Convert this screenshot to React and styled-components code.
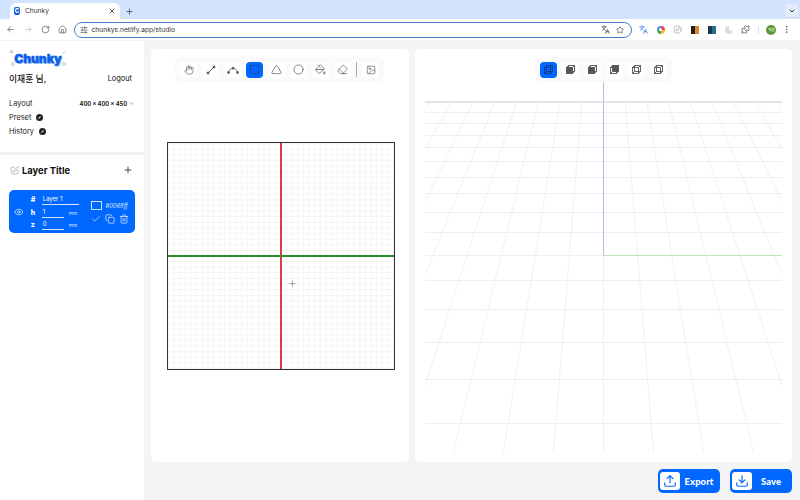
import React from 'react'
import styled, { createGlobalStyle } from 'styled-components'
import {
  ArrowLeft, ArrowRight, RotateCw, Home, X, Plus, ChevronDown, SlidersHorizontal, Languages, Star,
  Puzzle, EllipsisVertical, Compass, Hand, Square, Triangle, Circle, PaintBucket, Eraser, Image,
  Eye, Check, Copy, Trash2, SquarePen, Upload, Download,
} from 'lucide-react'

const BLUE = '#0068ff'

const Global = createGlobalStyle`
html, body { margin: 0; padding: 0; background: #f4f4f4; }
body { font-family: Inter, "Noto Sans CJK KR", sans-serif; color: #111; overflow: hidden; }
* { box-sizing: border-box; }
`
const Page = styled.div`
width: 800px;
height: 500px;
display: flex;
flex-direction: column;
overflow: hidden;
`
const TabStrip = styled.div`
height: 19px;
background: #d3e3fd;
display: flex;
align-items: flex-end;
padding-left: 10px;
`
const Tab = styled.div`
width: 110px;
height: 16px;
background: #fff;
border-radius: 6px 6px 0 0;
display: flex;
align-items: center;
padding: 0 4px 0 4px;
font-size: 6.6px;
color: #333;
`
const Favicon = styled.span`
width: 6px;
height: 8px;
background: #0a5fe0;
border-radius: 2px;
color: #fff;
font-size: 6px;
font-weight: 800;
line-height: 8px;
text-align: center;
margin-right: 5px;
`
const TabTitle = styled.span`
flex: 1;
`
const NewTab = styled.div`
width: 20px;
height: 16px;
display: flex;
align-items: center;
justify-content: center;
margin-left: -1px;
color: #444;
`
const TabMenu = styled.div`
margin-left: auto;
margin-right: 2px;
margin-bottom: 2px;
width: 13px;
height: 13px;
border-radius: 4px;
background: #e4edfd;
display: flex;
align-items: center;
justify-content: center;
color: #333;
`
const BrowserBar = styled.div`
height: 22px;
background: #fff;
display: flex;
align-items: center;
padding: 0 6px 0 2px;
border-bottom: 1px solid #f0f0f0;
`
const NavButton = styled.div`
width: 17.4px;
display: flex;
justify-content: center;
color: ${p => (p.$off ? '#c0c0c0' : '#666')};
`
const Address = styled.div`
width: 558px;
height: 16px;
margin-left: 2.4px;
border: 1.5px solid #4a7fc8;
border-radius: 8px;
display: flex;
align-items: center;
padding: 0 6.5px 0 5px;
font-size: 6.7px;
color: #333;
`
const Url = styled.span`
flex: 1;
margin-left: 3.5px;
`
const AddressIcon = styled.span`
display: flex;
color: #444;
margin-left: 6.5px;
`
const Extensions = styled.div`
display: flex;
align-items: center;
margin-left: 3.5px;
`
const ExtSlot = styled.div`
width: 17px;
height: 17px;
display: flex;
align-items: center;
justify-content: center;
`
const TwoTone = styled.span`
width: 8px;
height: 8px;
background: linear-gradient(90deg, ${p => p.$a} 50%, ${p => p.$b} 50%);
`
const Ring = styled.span`
width: 8px;
height: 8px;
border-radius: 50%;
background: conic-gradient(#e8453c 0 25%, #f9bb2d 0 50%, #3ba55c 0 75%, #4285f4 0);
display: flex;
align-items: center;
justify-content: center;
&::after {
  content: '';
  width: 3px;
  height: 3px;
  background: #fff;
  border-radius: 50%;
}
`
const Pale = styled.span`
width: 8px;
height: 8px;
border-radius: 50%;
background: conic-gradient(#fff 0 30%, #ddd 0 100%);
`
const BarSep = styled.span`
width: 1px;
height: 8px;
background: #d3e3fd;
margin: 0 5px 0 4px;
`
const Avatar = styled.span`
width: 10px;
height: 10px;
border-radius: 50%;
background: #5a9a33;
color: #fff;
font-size: 3.5px;
line-height: 10px;
text-align: center;
margin-left: 2px;
`
const Kebab = styled.span`
display: flex;
margin-left: 6px;
color: #555;
`
const Body = styled.div`
flex: 1;
display: flex;
min-height: 0;
`
const Sidebar = styled.aside`
width: 144px;
background: #fff;
display: flex;
flex-direction: column;
padding-top: 8px;
`
const LogoWrap = styled.div`
position: relative;
width: 58px;
height: 20px;
margin-left: 9px;
`
const LogoText = styled.div`
font-size: 12px;
line-height: 20px;
font-weight: 900;
color: #0a5fe8;
-webkit-text-stroke: 0.4px #0a5fe8;
text-shadow: 1px 1px 0 #9cc2f7;
text-align: center;
`
const LogoMarks = styled.svg`
position: absolute;
inset: 0;
`
const UserRow = styled.div`
display: flex;
justify-content: space-between;
align-items: center;
padding: 0 12px 0 9px;
margin-top: 1px;
height: 16px;
`
const UserName = styled.span`
font-size: 8.8px;
font-weight: 500;
`
const Logout = styled.span`
font-size: 7.4px;
`
const SettingRows = styled.div`
padding: 0 12px 0 9px;
margin-top: 12px;
height: 47px;
display: flex;
flex-direction: column;
gap: 4px;
`
const SettingRow = styled.div`
height: 10px;
display: flex;
align-items: center;
gap: 4px;
font-size: 7.4px;
color: #222;
`
const LayoutValue = styled.span`
margin-left: auto;
display: flex;
align-items: center;
gap: 1px;
font-size: 5.7px;
font-weight: 700;
margin-right: -3px;
`
const HelpDot = styled.span`
width: 7px;
height: 7px;
border-radius: 50%;
background: #222;
margin-left: 1px;
display: flex;
align-items: center;
justify-content: center;
&::after {
  content: '';
  width: 3px;
  height: 1px;
  background: #ddd;
  transform: rotate(-45deg);
}
`
const Divider = styled.div`
height: 3px;
background: #f1f1f1;
margin-top: 7px;
`
const LayerHead = styled.div`
display: flex;
align-items: center;
padding: 0 11px 0 10px;
margin-top: 7px;
height: 16px;
color: #aaa;
`
const LayerTitle = styled.h2`
margin: 0 0 0 3px;
flex: 1;
font-size: 9.4px;
font-weight: 700;
color: #111;
`
const AddLayer = styled.span`
display: flex;
color: #333;
`
const LayerCard = styled.div`
margin: 12px 0 0 9px;
width: 126px;
height: 43px;
background: ${BLUE};
border-radius: 5px;
color: #fff;
display: flex;
align-items: center;
padding: 1px 6px 0 5px;
`
const Fields = styled.div`
margin-left: 5px;
width: 55px;
display: grid;
grid-template-columns: 13px 1fr;
row-gap: 1.500px;
align-items: center;
`
const FieldLabel = styled.span`
font-size: 7px;
font-weight: 800;
text-align: left;
padding-left: 2px;
`
const FieldValue = styled.div`
display: flex;
align-items: flex-end;
gap: 5px;
height: 11px;
`
const FieldInput = styled.span`
display: block;
width: ${p => p.$w}px;
height: 11px;
line-height: 10px;
font-size: 6px;
border-bottom: 1px solid #cfe1ff;
padding-left: 1px;
`
const Unit = styled.span`
font-size: 5px;
line-height: 9px;
color: #d5e5ff;
`
const CardSide = styled.div`
margin-left: 9px;
display: flex;
flex-direction: column;
gap: 4px;
`
const ColorRow = styled.div`
display: flex;
align-items: center;
gap: 3.5px;
font-size: 5.8px;
font-style: italic;
color: #dbe8ff;
`
const Swatch = styled.span`
width: 11px;
height: 9px;
background: ${BLUE};
border: 1px solid #cfe1ff;
`
const CardActions = styled.div`
display: flex;
align-items: center;
gap: 4px;
padding-left: 0;
`
const Main = styled.main`
flex: 1;
display: flex;
flex-direction: column;
padding: 8px 8px 0 7px;
`
const Panels = styled.div`
display: flex;
gap: 6px;
height: 413px;
`
const Panel = styled.section`
width: ${p => p.$w}px;
background: #fff;
border-radius: 5px;
display: flex;
flex-direction: column;
align-items: center;
padding-top: 8px;
`
const ToolBar = styled.div`
display: flex;
align-items: center;
gap: 5px;
height: 25px;
padding: 0 5px;
margin-right: ${p => (p.$nudge ? 1 : 0)}px;
background: #fafafa;
border-radius: 6px;
`
const ToolButton = styled.button`
width: 17px;
height: 16px;
padding: 0;
border: 0;
border-radius: 4px;
background: ${p => (p.$active ? BLUE : '#fff')};
color: ${p => (p.$active ? '#0f3a8a' : '#555')};
display: flex;
align-items: center;
justify-content: center;
`
const ToolSep = styled.span`
width: 1px;
height: 15px;
background: #aaa;
`
const Sketch = styled.div`
position: relative;
width: 228px;
height: 228px;
margin: 60px 0 0 2px;
border: 1.5px solid #333;
background-color: #fff;
background-image:
  linear-gradient(#f4f4f4 1px, transparent 1px),
  linear-gradient(90deg, #f4f4f4 1px, transparent 1px);
background-size: 5.63px 5.63px;
`
const AxisV = styled.div`
position: absolute;
top: 0;
bottom: 0;
left: 112px;
width: 2px;
background: #d9403f;
`
const AxisH = styled.div`
position: absolute;
left: 0;
right: 0;
top: 111.5px;
height: 2px;
background: #2e8b2e;
`
const Cursor = styled.span`
position: absolute;
left: 120px;
top: 136px;
display: flex;
color: #666;
`
const Scene = styled.svg`
display: block;
width: 377px;
height: 372px;
`
const ActionBar = styled.div`
display: flex;
justify-content: flex-end;
gap: 10px;
margin-top: 7px;
`
const ActionButton = styled.button`
width: 62px;
height: 24px;
padding: 3px 0 3px 2px;
border: 0;
border-radius: 5px;
background: ${BLUE};
color: #fff;
font-family: Lato, sans-serif;
font-size: 9.4px;
font-weight: 900;
letter-spacing: 0.1px;
display: flex;
align-items: center;
`
const ActionIcon = styled.span`
width: 20px;
height: 18px;
background: #fff;
border-radius: 3px;
color: ${BLUE};
display: flex;
align-items: center;
justify-content: center;
`
const ActionLabel = styled.span`
flex: 1;
text-align: center;
padding-right: 2px;
`

const SegmentIcon = () => (
  <svg width="10" height="10" viewBox="0 0 10 10" fill="none" stroke="currentColor" strokeWidth="1">
    <path d="M2 8 8 2" />
    <circle cx="2" cy="8" r="1" fill="currentColor" />
    <circle cx="8" cy="2" r="1" fill="currentColor" />
  </svg>
)

const CurveIcon = () => (
  <svg width="12" height="10" viewBox="0 0 12 10" fill="none" stroke="currentColor" strokeWidth="0.8">
    <path d="M1.5 7.5C2.5 2 9.500 2 10.500 7.500" />
    <circle cx="1.500" cy="7.500" r="1" fill="currentColor" />
    <circle cx="10.500" cy="7.500" r="1" fill="currentColor" />
    <circle cx="6" cy="3.200" r="1" fill="currentColor" />
  </svg>
)

// faces: which square of the little cube is the solid one
const CubeIcon = ({ dark, back }) => (
  <svg width="11" height="11" viewBox="0 0 11 11" fill="none" stroke="currentColor" strokeWidth="0.9">
    <rect x="3.500" y="1.500" width="6" height="6" fill={back ? 'currentColor' : 'none'} />
    <rect x="1.500" y="3.500" width="6" height="6" fill={dark ? 'currentColor' : 'none'} />
    <path d="M1.500 3.500 3.500 1.500M7.500 3.500 9.500 1.500M7.500 9.500 9.500 7.500M1.500 9.500 3.500 7.500" />
  </svg>
)

const thin = { strokeWidth: 1.5 }

const sketchTools = [
  { icon: <Hand size={10} {...thin} /> },
  { icon: <SegmentIcon /> },
  { icon: <CurveIcon /> },
  { icon: <Square size={11} {...thin} color="#123a80" />, active: true },
  { icon: <Triangle size={11} {...thin} /> },
  { icon: <Circle size={11} {...thin} /> },
  { icon: <PaintBucket size={11} {...thin} /> },
  { icon: <Eraser size={11} {...thin} /> },
]

const views = [
  { active: true, dark: false },
  { dark: true },
  { dark: true },
  { back: true },
  { back: false },
  { back: false },
]

const floorRows = [112, 123, 135, 147, 161, 177, 193, 212, 232, 255, 280, 309, 342, 379, 423]
const CENTER = 188.5
const TOP = 20
const BOTTOM = 370
const spread = y => 21.7 + 0.0809 * (y - TOP)

const Floor = () => {
  const spokes = []
  for (let n = -8; n <= 8; n++) {
    spokes.push({ n, x1: CENTER + n * spread(TOP), x2: CENTER + n * spread(BOTTOM) })
  }
  return (
    <Scene viewBox="0 0 377 372">
      <defs>
        <clipPath id="floor-clip">
          <rect x="10" y={TOP} width="357" height={BOTTOM - TOP} />
        </clipPath>
      </defs>
      <g clipPath="url(#floor-clip)" stroke="#ececec" strokeWidth="0.8">
        {spokes.map(s => (
          <line key={s.n} x1={s.x1} y1={TOP} x2={s.x2} y2={BOTTOM} />
        ))}
      </g>
      {floorRows.map(y => (
        <line key={y} x1="10" x2="367" y1={y - 82 + 0.5} y2={y - 82 + 0.5} stroke="#eeeeee" />
      ))}
      <line x1="10" x2="367" y1={TOP} y2={TOP} stroke="#e4e4e4" strokeWidth="2" />
      <line x1={CENTER} x2={CENTER} y1="0" y2="173.500" stroke="#b9b9e6" />
      <line x1={CENTER} x2="367" y1="173.500" y2="173.500" stroke="#b3e8ae" />
    </Scene>
  )
}

const App = () => {
  return (
    <Page>
      <Global />
      <TabStrip>
        <Tab>
          <Favicon>C</Favicon>
          <TabTitle>Chunky</TabTitle>
          <X size={8} strokeWidth={2.500} />
        </Tab>
        <NewTab><Plus size={9} /></NewTab>
        <TabMenu><ChevronDown size={8} strokeWidth={3} /></TabMenu>
      </TabStrip>
      <BrowserBar>
        <NavButton><ArrowLeft size={9} /></NavButton>
        <NavButton $off><ArrowRight size={9} /></NavButton>
        <NavButton><RotateCw size={9} /></NavButton>
        <NavButton><Home size={9} /></NavButton>
        <Address>
          <SlidersHorizontal size={8} />
          <Url>chunkys.netlify.app/studio</Url>
          <AddressIcon><Languages size={9} /></AddressIcon>
          <AddressIcon><Star size={8} /></AddressIcon>
        </Address>
        <Extensions>
          <ExtSlot><Languages size={9} color="#3f78e0" /></ExtSlot>
          <ExtSlot><Ring /></ExtSlot>
          <ExtSlot><Compass size={9} color="#aaa" /></ExtSlot>
          <ExtSlot><TwoTone $a="#222" $b="#e8812c" /></ExtSlot>
          <ExtSlot><TwoTone $a="#1c3a4a" $b="#2a6a8a" /></ExtSlot>
          <ExtSlot><Pale /></ExtSlot>
          <ExtSlot><Puzzle size={9} color="#444" /></ExtSlot>
          <BarSep />
          <Avatar>재훈</Avatar>
          <Kebab><EllipsisVertical size={9} /></Kebab>
        </Extensions>
      </BrowserBar>
      <Body>
        <Sidebar>
          <LogoWrap>
            <LogoText>Chunky</LogoText>
            <LogoMarks width="58" height="20" viewBox="0 0 58 20" fill="none" stroke="#aaa" strokeWidth="0.7">
              <path d="M1 3.500 2.500 1 4 3.500Z" />
              <circle cx="4" cy="15" r="1.500" />
              <path d="M53 5 56 2" />
              <circle cx="55" cy="15" r="1.500" />
            </LogoMarks>
          </LogoWrap>
          <UserRow>
            <UserName>이재훈 님,</UserName>
            <Logout>Logout</Logout>
          </UserRow>
          <SettingRows>
            <SettingRow>
              Layout
              <LayoutValue>400 x 400 x 450 <ChevronDown size={7} color="#666" /></LayoutValue>
            </SettingRow>
            <SettingRow>Preset <HelpDot /></SettingRow>
            <SettingRow>History <HelpDot /></SettingRow>
          </SettingRows>
          <Divider />
          <LayerHead>
            <SquarePen size={9} />
            <LayerTitle>Layer Title</LayerTitle>
            <AddLayer><Plus size={10} /></AddLayer>
          </LayerHead>
          <LayerCard>
            <Eye size={10} strokeWidth={1.5} />
            <Fields>
              <FieldLabel>#</FieldLabel>
              <FieldValue><FieldInput $w={37}>Layer 1</FieldInput></FieldValue>
              <FieldLabel>h</FieldLabel>
              <FieldValue><FieldInput $w={22}>1</FieldInput><Unit>mm</Unit></FieldValue>
              <FieldLabel>z</FieldLabel>
              <FieldValue><FieldInput $w={22}>0</FieldInput><Unit>mm</Unit></FieldValue>
            </Fields>
            <CardSide>
              <ColorRow><Swatch />#0068ff</ColorRow>
              <CardActions>
                <Check size={10} strokeWidth={1.5} />
                <Copy size={10} strokeWidth={1.5} />
                <Trash2 size={10} strokeWidth={1.5} />
              </CardActions>
            </CardSide>
          </LayerCard>
        </Sidebar>
        <Main>
          <Panels>
            <Panel $w={258}>
              <ToolBar $nudge>
                {sketchTools.map((t, i) => (
                  <ToolButton key={i} $active={t.active}>{t.icon}</ToolButton>
                ))}
                <ToolSep />
                <ToolButton><Image size={10} {...thin} /></ToolButton>
              </ToolBar>
              <Sketch>
                <AxisV />
                <AxisH />
                <Cursor><Plus size={9} strokeWidth={1.500} /></Cursor>
              </Sketch>
            </Panel>
            <Panel $w={377}>
              <ToolBar>
                {views.map((v, i) => (
                  <ToolButton key={i} $active={v.active}>
                    <CubeIcon dark={v.dark} back={v.back} />
                  </ToolButton>
                ))}
              </ToolBar>
              <Floor />
            </Panel>
          </Panels>
          <ActionBar>
            <ActionButton>
              <ActionIcon><Upload size={14} /></ActionIcon>
              <ActionLabel>Export</ActionLabel>
            </ActionButton>
            <ActionButton>
              <ActionIcon><Download size={14} /></ActionIcon>
              <ActionLabel>Save</ActionLabel>
            </ActionButton>
          </ActionBar>
        </Main>
      </Body>
    </Page>
  )
}

export default App
